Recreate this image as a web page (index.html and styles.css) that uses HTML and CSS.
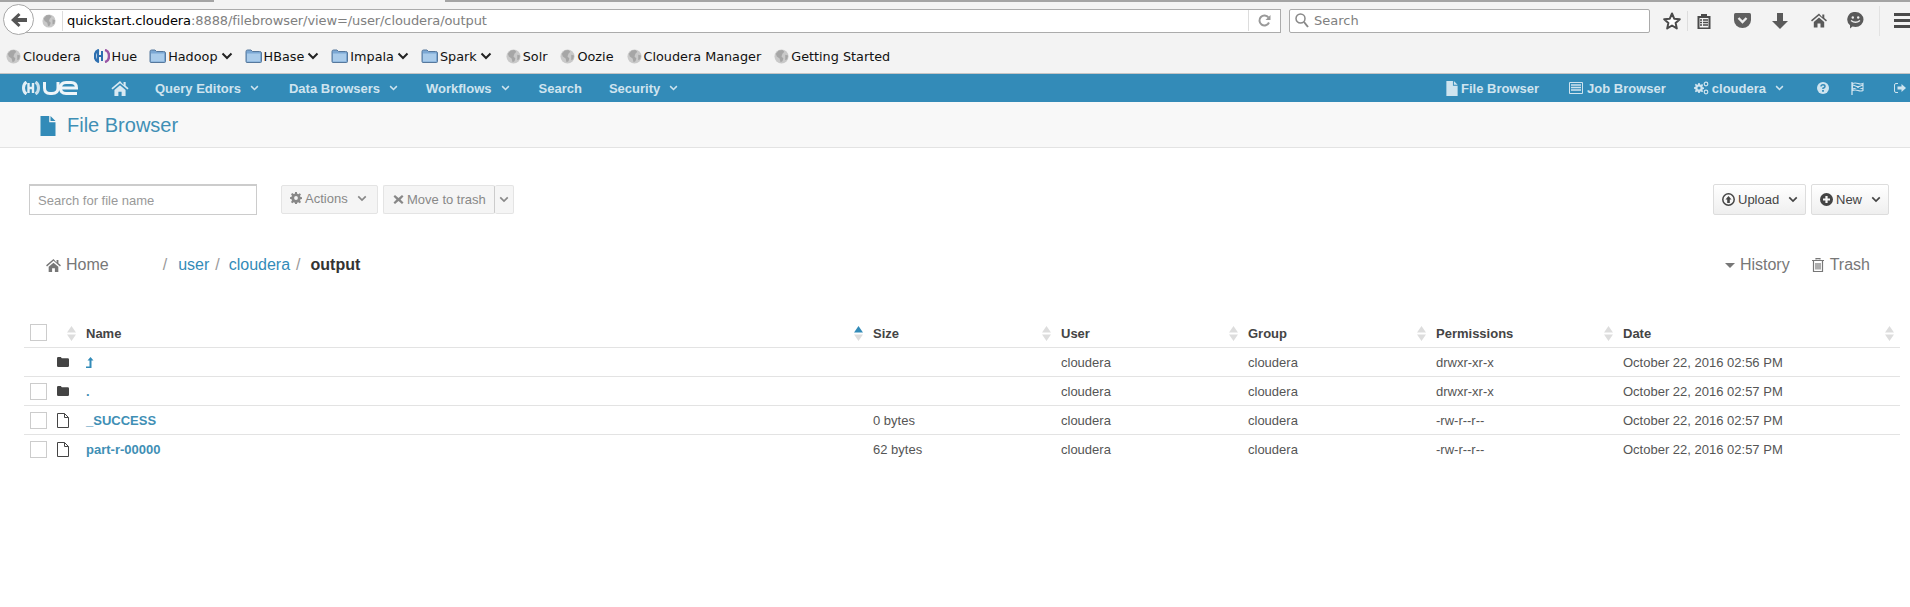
FILE: index.html
```html
<!DOCTYPE html>
<html>
  <head>
    <meta charset="utf-8">
    <title>File Browser</title>
    <link rel="stylesheet" href="styles.css">
  </head>

  <body>
    <svg class="sprite">
      <symbol id="globe" viewBox="0 0 16 16">
        <circle cx="8" cy="8" r="7.500" fill="#c9c9c9"/>
        <path d="M5 1.500 9 1l2 2-2 2-1 3 2 2-1 3-2 1-1-4-3-2-1-3zM12 6l3 1-1 4-2 1z" fill="#a6a6a6"/>
      </symbol>
      <symbol id="folder-blue" viewBox="0 0 16 16">
        <path d="M.5 3.500q0-1.500 1.500-1.500h3.500l1.500 1.500h7q2 0 2 1.500v8.500q0 1-1 1h-13.500q-1 0-1-1z" fill="#7ba7d3" stroke="#56789c"/>
        <path d="M1.500 5.500h13v8h-13z" fill="#a9cbea"/>
      </symbol>
      <symbol id="chevron" viewBox="0 0 12 8">
        <path d="M1.500 1.500 6 6l4.500-4.500" fill="none" stroke="currentColor" stroke-width="2"/>
      </symbol>
      <symbol id="home" viewBox="0 0 16 14">
        <path d="M8 0 0 6.800l1 1.200 7-6 7 6 1-1.200-2.700-2.300V1h-2v2.800zM2.800 8.400V14h3.700v-4h3v4h3.700V8.400L8 4z" fill="currentColor"/>
      </symbol>
      <symbol id="file" viewBox="0 0 12 16">
        <path d="M0 0h7v5h5v11H0zM8 0l4 4H8z" fill="currentColor"/>
      </symbol>
      <symbol id="file-o" viewBox="0 0 12 15">
        <path d="M.5.500h7l4 4v10H.500zM7.500.500v4h4" fill="#fff" stroke="#444"/>
      </symbol>
      <symbol id="folder" viewBox="0 0 12 10">
        <path d="M0 1.200Q0 0 1.200 0h2.600l1 1.200h6Q12 1.200 12 2.400v6.400Q12 10 10.800 10H1.200Q0 10 0 8.800z" fill="#444"/>
      </symbol>
      <symbol id="cog" viewBox="0 0 14 14">
        <path d="M6 0h2l.4 2 1.300.5 1.700-1.100 1.400 1.400-1.100 1.700.5 1.300 2 .4v2l-2 .4-.5 1.300 1.100 1.700-1.400 1.400-1.700-1.100-1.300.5-.4 2H6l-.4-2-1.300-.5-1.700 1.100-1.400-1.400 1.100-1.700L1.800 8.400 0 8V6l1.800-.4.500-1.300L1.200 2.600l1.400-1.400 1.700 1.100L5.600 2zM7 4.800a2.200 2.200 0 1 0 0 4.400 2.200 2.200 0 0 0 0-4.400z" fill="currentColor" fill-rule="evenodd"/>
      </symbol>
      <symbol id="trash" viewBox="0 0 12 14">
        <path d="M4 1.500V.700h4v.8M0 2.500h12M1.500 3v10.500h9V3M4 5v6.500M6 5v6.500M8 5v6.500" fill="none" stroke="currentColor" stroke-width="1.200"/>
      </symbol>
      <symbol id="sort" viewBox="0 0 9 15">
        <path d="M4.500 0 9 6.500H0zM0 8.500h9L4.500 15z" fill="#ddd"/>
      </symbol>
    </svg>

    <div class="tabline"><i class="tabline-l"></i><i class="tabline-r"></i></div>

    <div class="browser-bar">
      <div class="back">
        <svg width="16" height="14" viewBox="0 0 16 14"><path d="M7.500 0 9.500 2 6.500 5H16v4H6.500l3 3-2 2L0 7z" fill="#555"/></svg>
      </div>
      <div class="urlbar">
        <svg class="url-globe" width="14" height="14"><use href="#globe"/></svg>
        <span class="url-text"><b>quickstart.cloudera</b>:8888/filebrowser/view=/user/cloudera/output</span>
        <span class="url-reload">
          <svg width="13" height="13" viewBox="0 0 13 13"><path d="M10.500 3.500A5 5 0 1 0 11 8.500" fill="none" stroke="#999" stroke-width="2"/><path d="M12.500 1v5h-5z" fill="#999"/></svg>
        </span>
      </div>
      <div class="searchbar">
        <svg width="14" height="15" viewBox="0 0 14 15"><circle cx="5.500" cy="5.500" r="4.500" fill="none" stroke="#888" stroke-width="1.500"/><path d="M9 9l4 5" stroke="#888" stroke-width="2"/></svg>
        <span>Search</span>
      </div>
      <div class="tools">
        <svg class="tool-star" width="18" height="18" viewBox="0 0 18 18"><path d="M9 1.500 11.200 6.700 16.800 7.200 12.600 10.900 13.800 16.400 9 13.500 4.200 16.400 5.400 10.900 1.200 7.200 6.800 6.700z" fill="#fff" stroke="#4a4a4a" stroke-width="2" stroke-linejoin="round"/></svg>
        <i class="tool-sep"></i>
        <svg class="tool-clip" width="14" height="16" viewBox="0 0 14 16"><path d="M4 1h6v2h3.500v13H.500V3H4z" fill="#4a4a4a"/><path d="M2.500 5h9v9.500h-9z" fill="#f3f3f3"/><path d="M3 7h8M3 9.500h8M3 12h8" stroke="#4a4a4a" stroke-width="1.300"/><path d="M5.500 5.500v8" stroke="#f3f3f3"/></svg>
        <svg class="tool-pocket" width="17" height="15" viewBox="0 0 17 15"><path d="M1.500 0h14Q17 0 17 1.500V7A8.500 8 0 0 1 0 7V1.500Q0 0 1.500 0z" fill="#606060"/><path d="M4.500 5l4 4 4-4" fill="none" stroke="#eee" stroke-width="2.400"/></svg>
        <svg class="tool-down" width="16" height="16" viewBox="0 0 16 16"><path d="M5 0h6v8h5l-8 8-8-8h5z" fill="#5a5a5a"/></svg>
        <svg class="tool-home" width="16" height="15"><use href="#home"/></svg>
        <svg class="tool-smile" width="17" height="17" viewBox="0 0 17 17"><path d="M8.500 0a8 7.500 0 0 1 0 15c-1 0-2-.2-3-.5L3 16.500v-3.300A7.500 7.500 0 0 1 8.500 0z" fill="#5a5a5a"/><circle cx="5.800" cy="5.500" r="1.200" fill="#eee"/><circle cx="11.200" cy="5.500" r="1.200" fill="#eee"/><path d="M4 8.500q4.500 3.500 9 0" fill="none" stroke="#eee" stroke-width="1.400"/></svg>
        <i class="tool-sep-tall"></i>
        <span class="hamburger"><i></i><i></i><i></i></span>
      </div>
    </div>

    <div class="bookmarks">
      <span class="bm bm-cloudera"><svg width="15" height="15"><use href="#globe"/></svg>Cloudera</span>
      <span class="bm bm-hue">
        <svg width="16" height="14" viewBox="0 0 16 14"><path d="M5 1Q1 2 1 7t4 6" fill="none" stroke="#2d6fb0" stroke-width="2.500"/><path d="M4 2v10M8 2v10M4 7h4" stroke="#2d6fb0" stroke-width="2"/><path d="M11 1q4 1 4 6t-4 6" fill="none" stroke="#9a55a5" stroke-width="2.500"/></svg>Hue
      </span>
      <span class="bm bm-hadoop"><svg width="17" height="16"><use href="#folder-blue"/></svg>Hadoop<svg class="bm-chev" width="12" height="8"><use href="#chevron"/></svg></span>
      <span class="bm bm-hbase"><svg width="17" height="16"><use href="#folder-blue"/></svg>HBase<svg class="bm-chev" width="12" height="8"><use href="#chevron"/></svg></span>
      <span class="bm bm-impala"><svg width="17" height="16"><use href="#folder-blue"/></svg>Impala<svg class="bm-chev" width="12" height="8"><use href="#chevron"/></svg></span>
      <span class="bm bm-spark"><svg width="17" height="16"><use href="#folder-blue"/></svg>Spark<svg class="bm-chev" width="12" height="8"><use href="#chevron"/></svg></span>
      <span class="bm bm-solr"><svg width="15" height="15"><use href="#globe"/></svg>Solr</span>
      <span class="bm bm-oozie"><svg width="15" height="15"><use href="#globe"/></svg>Oozie</span>
      <span class="bm bm-manager"><svg width="15" height="15"><use href="#globe"/></svg>Cloudera Manager</span>
      <span class="bm bm-started"><svg width="15" height="15"><use href="#globe"/></svg>Getting Started</span>
    </div>

    <nav class="navbar">
      <svg class="logo" width="56" height="14" viewBox="0 0 56 14">
        <path d="M4.500 1Q1.500 3 1.500 7t3 6" fill="none" stroke="#e3eff6" stroke-width="3"/>
        <path d="M6.500 2v10M11 2v10M6.500 7H11" stroke="#e3eff6" stroke-width="2.400"/>
        <path d="M13.500 1q3 2 3 6t-3 6" fill="none" stroke="#c9dfeb" stroke-width="3"/>
        <path d="M22.500 1v6q0 5.500 5.500 5.500h2q6 0 6-5.500V1M55 12.500H44q-5.500 0-5.500-5.500T44 1.500h5q5.500 0 5.500 5.500H39" fill="none" stroke="#eef5f9" stroke-width="3"/>
      </svg>
      <svg class="nav-home" width="18" height="15"><use href="#home"/></svg>
      <div class="nav-left">
        <a class="nav-item nav-query">Query Editors<svg width="9" height="6"><use href="#chevron"/></svg></a>
        <a class="nav-item nav-data">Data Browsers<svg width="9" height="6"><use href="#chevron"/></svg></a>
        <a class="nav-item nav-work">Workflows<svg width="9" height="6"><use href="#chevron"/></svg></a>
        <a class="nav-item nav-search">Search</a>
        <a class="nav-item">Security<svg width="9" height="6"><use href="#chevron"/></svg></a>
      </div>
      <div class="nav-right">
        <a class="nav-item nav-files"><svg width="12" height="15"><use href="#file"/></svg>File Browser</a>
        <a class="nav-item nav-jobs">
          <svg width="14" height="12" viewBox="0 0 14 12"><path d="M.5.500h13v11H.500z" fill="none" stroke="currentColor"/><path d="M2 3h10M2 5.500h10M2 8h10" stroke="currentColor" stroke-width="1.300"/></svg>Job Browser
        </a>
        <a class="nav-item nav-user">
          <svg width="15" height="14" viewBox="0 0 15 14"><use href="#cog" width="10" height="10" y="2"/><circle cx="12" cy="3" r="1.800" fill="none" stroke="currentColor" stroke-width="1.200"/><circle cx="12" cy="11" r="1.800" fill="none" stroke="currentColor" stroke-width="1.200"/></svg>cloudera<svg class="nav-user-chev" width="9" height="6"><use href="#chevron"/></svg>
        </a>
        <a class="nav-icon nav-help">
          <svg width="12" height="12" viewBox="0 0 12 12"><circle cx="6" cy="6" r="6" fill="currentColor"/><path d="M4 4.500Q4 2.800 6 2.800t2 1.700Q8 5.500 6 6.300v.8" fill="none" stroke="#338bb8" stroke-width="1.500"/><path d="M5.100 8h1.800v1.700H5.100z" fill="#338bb8"/></svg>
        </a>
        <a class="nav-icon nav-flag">
          <svg width="13" height="13" viewBox="0 0 13 13"><path d="M1 0v13" stroke="currentColor" stroke-width="1.300"/><path d="M1.500 1.500q2.500-1 5.500 0t5 0v7q-2 1-5 0t-5.500 0zM2 3l10 4M12 3 2 7" fill="none" stroke="currentColor" stroke-width="1.100"/></svg>
        </a>
        <a class="nav-icon nav-out">
          <svg width="12" height="10" viewBox="0 0 12 10"><path d="M4 .500H2Q.500.500.500 2v6q0 1.500 1.500 1.500h2" fill="none" stroke="currentColor"/><path d="M3.500 3.500h4V1L12 5 7.500 9V6.500h-4z" fill="currentColor"/></svg>
        </a>
      </div>
    </nav>

    <header class="subnav">
      <svg width="16" height="20"><use href="#file"/></svg>
      <h1>File Browser</h1>
    </header>

    <main class="content">
      <div class="toolbar">
        <input class="filter" placeholder="Search for file name">
        <div class="btn btn-off btn-actions">
          <span class="btn-raised"><svg width="12" height="12"><use href="#cog"/></svg>Actions<svg class="btn-chev" width="10" height="7"><use href="#chevron"/></svg></span>
        </div>
        <div class="btn btn-off btn-trash">
          <svg width="11" height="11" viewBox="0 0 11 11"><path d="M2 1 5.500 4 9 1l1.500 1.500L7.500 5.500l3 3L9 10 5.500 7 2 10 .500 8.500l3-3-3-3z" fill="currentColor"/></svg>Move to trash
        </div>
        <div class="btn btn-off btn-caret"><svg width="10" height="7"><use href="#chevron"/></svg></div>
        <div class="toolbar-right">
          <div class="btn btn-on btn-upload">
            <svg width="13" height="13" viewBox="0 0 13 13"><circle cx="6.500" cy="6.500" r="5.700" fill="none" stroke="currentColor" stroke-width="1.500"/><path d="M6.500 3 9.500 6.500H7.800V10H5.200V6.500H3.500z" fill="currentColor"/></svg>Upload<svg class="btn-chev" width="10" height="7"><use href="#chevron"/></svg>
          </div>
          <div class="btn btn-on btn-new">
            <svg width="13" height="13" viewBox="0 0 13 13"><circle cx="6.500" cy="6.500" r="6.500" fill="currentColor"/><path d="M6.500 3v7M3 6.500h7" stroke="#f8f8f8" stroke-width="2.200"/></svg>New<svg class="btn-chev" width="10" height="7"><use href="#chevron"/></svg>
          </div>
        </div>
      </div>

      <div class="crumbs">
        <a class="crumb-home"><svg width="15" height="13"><use href="#home"/></svg>Home</a>
        <span class="crumb-slash crumb-first">/</span>
        <a class="crumb-link">user</a>
        <span class="crumb-slash">/</span>
        <a class="crumb-link">cloudera</a>
        <span class="crumb-slash">/</span>
        <strong>output</strong>
        <div class="crumbs-right">
          <a class="crumb-history"><i class="caret"></i>History</a>
          <a class="crumb-trash"><svg width="12" height="14"><use href="#trash"/></svg>Trash</a>
        </div>
      </div>

      <table class="files">
        <colgroup>
          <col class="col-check"><col class="col-type"><col class="col-name"><col class="col-size">
          <col class="col-user"><col class="col-group"><col class="col-perm"><col class="col-date">
        </colgroup>
        <thead>
          <tr>
            <th><i class="check"></i></th>
            <th><div class="th-in"><span></span><svg width="9" height="15"><use href="#sort"/></svg></div></th>
            <th><div class="th-in"><span>Name</span><svg width="9" height="15" viewBox="0 0 9 15"><path d="M4.500 0 9 6.500H0z" fill="#338bb8"/><path d="M0 8.500h9L4.500 15z" fill="#ddd"/></svg></div></th>
            <th><div class="th-in"><span>Size</span><svg width="9" height="15"><use href="#sort"/></svg></div></th>
            <th><div class="th-in"><span>User</span><svg width="9" height="15"><use href="#sort"/></svg></div></th>
            <th><div class="th-in"><span>Group</span><svg width="9" height="15"><use href="#sort"/></svg></div></th>
            <th><div class="th-in"><span>Permissions</span><svg width="9" height="15"><use href="#sort"/></svg></div></th>
            <th><div class="th-in"><span>Date</span><svg width="9" height="15"><use href="#sort"/></svg></div></th>
          </tr>
        </thead>
        <tbody>
          <tr>
            <td></td>
            <td><svg width="12" height="10"><use href="#folder"/></svg></td>
            <td><a class="file-link"><svg width="8" height="11" viewBox="0 0 8 11"><path d="M0 9.500h3.500V3.500H1.500L4.500 0l3 3.500H5.500V11H0z" fill="#338bb8"/></svg></a></td>
            <td></td><td>cloudera</td><td>cloudera</td><td>drwxr-xr-x</td><td>October 22, 2016 02:56 PM</td>
          </tr>
          <tr>
            <td><i class="check"></i></td>
            <td><svg width="12" height="10"><use href="#folder"/></svg></td>
            <td><a class="file-link">.</a></td>
            <td></td><td>cloudera</td><td>cloudera</td><td>drwxr-xr-x</td><td>October 22, 2016 02:57 PM</td>
          </tr>
          <tr>
            <td><i class="check"></i></td>
            <td><svg width="12" height="15"><use href="#file-o"/></svg></td>
            <td><a class="file-link">_SUCCESS</a></td>
            <td>0 bytes</td><td>cloudera</td><td>cloudera</td><td>-rw-r--r--</td><td>October 22, 2016 02:57 PM</td>
          </tr>
          <tr>
            <td><i class="check"></i></td>
            <td><svg width="12" height="15"><use href="#file-o"/></svg></td>
            <td><a class="file-link">part-r-00000</a></td>
            <td>62 bytes</td><td>cloudera</td><td>cloudera</td><td>-rw-r--r--</td><td>October 22, 2016 02:57 PM</td>
          </tr>
        </tbody>
      </table>
    </main>
  </body>
</html>
```

FILE: styles.css
```css
* {
  box-sizing: border-box;
}

html,
body {
  margin: 0;
  height: 100%;
  overflow: hidden;
}

body {
  background-color: #fff;
  font-family: "Liberation Sans", Arial, sans-serif;
  font-size: 13px;
  color: #555;
}

i {
  display: block;
}

svg {
  display: block;
  flex: none;
}

.sprite {
  width: 0;
  height: 0;
  overflow: hidden;
  position: absolute;
}

/* browser chrome */
.tabline {
  display: flex;
  justify-content: space-between;
  height: 2px;
  background-color: #f3f3f3;
}

.tabline-l {
  width: 214px;
  background-color: #a4a4a4;
}

.tabline-r {
  width: 1465px;
  background-color: #a4a4a4;
}

.browser-bar {
  display: flex;
  align-items: center;
  height: 32px;
  padding: 0 0 0 3px;
  background-color: #f3f3f3;
  font-family: "DejaVu Sans", sans-serif;
}

.back {
  display: flex;
  align-items: center;
  justify-content: center;
  position: relative;
  width: 31px;
  height: 31px;
  margin-right: -9px;
  margin-top: 3px;
  background-color: #fff;
  border: 1px solid #a8a8a8;
  border-radius: 50%;
}

.urlbar {
  display: flex;
  align-items: center;
  width: 1256px;
  height: 24px;
  margin-top: 5px;
  padding-left: 16px;
  background-color: #fff;
  border: 1px solid #ababab;
  font-size: 13px;
  color: #808080;
}

.url-globe {
  margin-right: 6px;
}

.url-text {
  flex: 1;
  padding-left: 4px;
  border-left: 1px solid #ddd;
  line-height: 20px;
  letter-spacing: -0.09px;
}

.url-text b {
  font-weight: normal;
  color: #000;
}

.url-reload {
  display: flex;
  align-items: center;
  justify-content: center;
  width: 32px;
  height: 21px;
  border-left: 1px solid #ddd;
}

.searchbar {
  display: flex;
  align-items: center;
  gap: 5px;
  width: 361px;
  height: 24px;
  margin-top: 5px;
  margin-left: 8px;
  padding-left: 5px;
  background-color: #fff;
  border: 1px solid #ababab;
  border-radius: 2px;
  font-size: 13px;
  color: #808080;
}

.tools {
  display: flex;
  align-items: center;
  margin-top: 5px;
  color: #5a5a5a;
}

.tool-star {
  margin-left: 13px;
}

.tool-sep {
  width: 1px;
  height: 20px;
  margin-left: 6px;
  background-color: #ddd;
}

.tool-clip {
  margin-left: 9px;
}

.tool-pocket {
  margin-left: 23px;
}

.tool-down {
  margin-left: 21px;
}

.tool-home {
  margin-left: 23px;
}

.tool-smile {
  margin-left: 20px;
}

.tool-sep-tall {
  width: 1px;
  height: 30px;
  margin-left: 15px;
  background-color: #e2e2e2;
}

.hamburger {
  display: flex;
  flex-direction: column;
  gap: 3px;
  margin-left: 14px;
}

.hamburger i {
  width: 16px;
  height: 3px;
  background-color: #4a4a4a;
}

.bookmarks {
  display: flex;
  align-items: center;
  height: 40px;
  padding: 5px 0 0 6px;
  background-color: #f3f3f3;
  border-bottom: 1px solid #c4c4c4;
  font-family: "DejaVu Sans", sans-serif;
  font-size: 12.8px;
  color: #111;
}

.bm {
  display: flex;
  align-items: center;
  gap: 2px;
  white-space: nowrap;
}

.bm-chev {
  margin-left: 1px;
  color: #222;
}

.bm-cloudera {
  margin-right: 13px;
}

.bm-hue {
  margin-right: 12px;
}

.bm-hadoop,
.bm-hbase,
.bm-impala {
  margin-right: 12px;
}

.bm-spark {
  margin-right: 14px;
}

.bm-solr,
.bm-oozie,
.bm-manager {
  margin-right: 13px;
}

/* hue navigation */
.navbar {
  display: flex;
  align-items: center;
  height: 28px;
  padding-left: 22px;
  background-color: #338bb8;
  color: #cfe4ef;
  font-weight: bold;
  font-size: 13px;
}

.logo {
  margin-right: 33px;
}

.nav-home {
  color: #d8e9f2;
  margin-right: 26px;
}

.nav-left,
.nav-right {
  display: flex;
  align-items: center;
}

.nav-right {
  margin-left: auto;
  padding-right: 4px;
}

.nav-item {
  display: flex;
  align-items: center;
  gap: 9px;
  white-space: nowrap;
}

.nav-query {
  margin-right: 30px;
}

.nav-data {
  margin-right: 28px;
}

.nav-work {
  margin-right: 29px;
}

.nav-search {
  margin-right: 27px;
}

.nav-files {
  gap: 3px;
  margin-right: 30px;
}

.nav-jobs {
  gap: 4px;
  margin-right: 28px;
}

.nav-user {
  gap: 3px;
  margin-right: 33px;
}

.nav-user-chev {
  margin-left: 6px;
}

.nav-help {
  margin-right: 22px;
}

.nav-flag {
  margin-right: 30px;
}

.subnav {
  display: flex;
  align-items: center;
  gap: 11px;
  height: 46px;
  padding: 2px 0 0 40px;
  background-color: #f8f8f8;
  border-bottom: 1px solid #e3e3e3;
  color: #338bb8;
}

.subnav h1 {
  margin: 0;
  font-size: 20px;
  font-weight: normal;
  color: #3f8fb5;
}

/* file browser */
.content {
  padding: 36px 10px 0 24px;
}

.toolbar {
  display: flex;
  align-items: center;
  height: 31px;
  padding-left: 5px;
  padding-right: 11px;
}

.filter {
  width: 228px;
  height: 31px;
  margin-right: 24px;
  padding: 0 8px;
  border: 1px solid #ccc;
  border-top-width: 2px;
  font-family: inherit;
  font-size: 13px;
}

.filter::placeholder {
  color: #999;
  opacity: 1;
}

.btn {
  display: flex;
  align-items: center;
  gap: 3px;
  border: 1px solid #e4e4e4;
  border-radius: 2px;
}

.btn-off {
  height: 29px;
  background-color: #f5f5f5;
  color: #888;
}

.btn-on {
  height: 31px;
  background-image: linear-gradient(to bottom, #fff, #efefef);
  border-color: #ddd;
  color: #444;
}

.btn-raised {
  display: flex;
  align-items: center;
  gap: 3px;
  margin-top: -3px;
}

.btn-actions {
  width: 97px;
  margin-right: 5px;
  padding-left: 8px;
}

.btn-trash {
  width: 112px;
  padding-left: 9px;
  border-right-color: #ccc;
}

.btn-caret {
  justify-content: center;
  width: 19px;
  border-left: none;
}

.btn-chev {
  margin-left: 6px;
}

.toolbar-right {
  display: flex;
  gap: 5px;
  margin-left: auto;
}

.btn-upload {
  width: 93px;
  padding-left: 8px;
}

.btn-new {
  width: 78px;
  padding-left: 8px;
}

.crumbs {
  display: flex;
  align-items: center;
  height: 40px;
  margin-top: 30px;
  padding-left: 22px;
  padding-right: 30px;
  font-size: 16px;
  color: #777;
}

.crumb-home {
  display: flex;
  align-items: center;
  gap: 5px;
  margin-right: 54px;
}

.crumb-slash {
  margin-left: 6px;
  margin-right: 9px;
  color: #999;
}

.crumb-first {
  margin-left: 0;
  margin-right: 11px;
}

.crumb-link {
  color: #338bb8;
}

.crumbs strong {
  margin-left: 1px;
  color: #333;
}

.crumbs-right {
  display: flex;
  align-items: center;
  gap: 22px;
  margin-left: auto;
}

.crumb-history {
  display: flex;
  align-items: center;
  gap: 5px;
}

.caret {
  width: 0;
  height: 0;
  border-top: 5px solid #777;
  border-left: 5px solid transparent;
  border-right: 5px solid transparent;
}

.crumb-trash {
  display: flex;
  align-items: center;
  gap: 6px;
}

.files {
  width: 1876px;
  margin-top: 32px;
  table-layout: fixed;
  border-collapse: collapse;
}

.col-check {
  width: 26px;
}

.col-type {
  width: 28px;
}

.col-name {
  width: 787px;
}

.col-size {
  width: 188px;
}

.col-user {
  width: 187px;
}

.col-group {
  width: 188px;
}

.col-perm {
  width: 187px;
}

.col-date {
  width: 285px;
}

.files th {
  height: 30px;
  padding: 4px 2px 0 8px;
  text-align: left;
  color: #444;
  border-bottom: 1px solid #e3e3e3;
}

.files th:last-child {
  padding-right: 6px;
}

.files td {
  height: 29px;
  padding: 1px 8px 0;
  border-bottom: 1px solid #e3e3e3;
}

.files th:first-child,
.files td:first-child {
  padding: 1px 0 0 6px;
}

.files th:nth-child(2),
.files td:nth-child(2) {
  padding-left: 7px;
}

.files th:nth-child(2) {
  padding-right: 2px;
}

.files tbody tr:last-child td {
  border-bottom: none;
}

.th-in {
  display: flex;
  align-items: center;
  justify-content: space-between;
}

.check {
  width: 17px;
  height: 17px;
  background-color: #fff;
  border: 1px solid #ccc;
}

.file-link {
  font-weight: bold;
  color: #3f8fb5;
}
```
